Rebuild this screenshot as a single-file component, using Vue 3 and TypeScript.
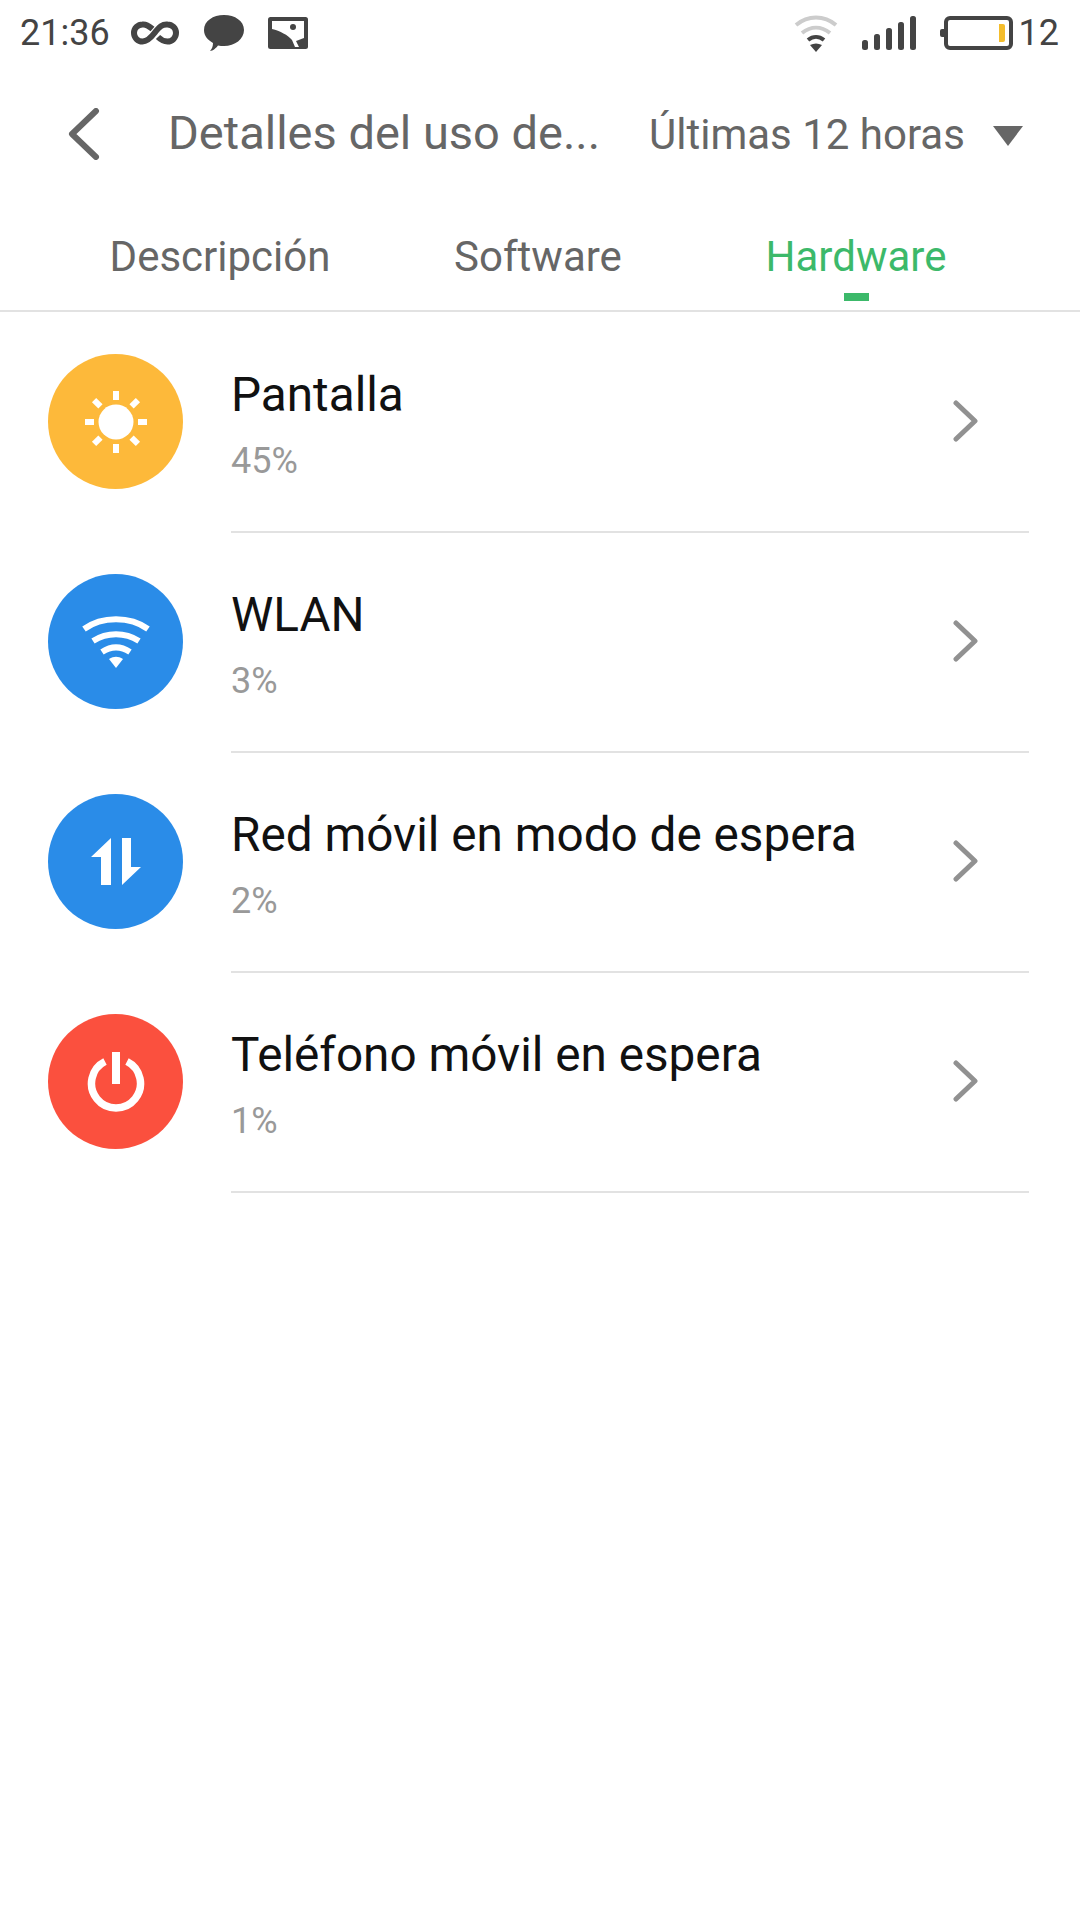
<script setup lang="ts">
interface Row {
  name: string;
  percent: string;
  color: string;
  icon: string;
}

const tabs = ["Descripción", "Software", "Hardware"];
const rows: Row[] = [
  { name: "Pantalla", percent: "45%", color: "#fdb93a", icon: "sun" },
  { name: "WLAN", percent: "3%", color: "#2a8ce8", icon: "wifi" },
  { name: "Red móvil en modo de espera", percent: "2%", color: "#2a8ce8", icon: "data" },
  { name: "Teléfono móvil en espera", percent: "1%", color: "#fb503e", icon: "power" },
];
</script>

<template>
  <div class="page">
    <div class="status">
      <span class="time">21:36</span>
      <svg class="st-inf" width="48" height="24" viewBox="0 0 48 24">
        <path d="M21.500 8C18 5 15 3 11.500 3.500a8.500 8.500 0 0 0 0 17c4 0 7-2 12-8.500s8-9 13-8.500a8.500 8.500 0 0 1 0 17c-4 0-7-2-9.500-4.500" fill="none" stroke="#444" stroke-width="6" />
      </svg>
      <svg class="st-msg" width="40" height="37" viewBox="0 0 40 37">
        <path d="M20 0C31 0 40 6 40 15S31 31 20 31c-2 0-4 0-6-.5C12 33 9 36 6 36c2-2 3-5 3-8C4 25 0 21 0 15 0 6 9 0 20 0Z" fill="#444" />
      </svg>
      <svg class="st-pic" width="40" height="32" viewBox="0 0 40 32">
        <rect width="40" height="32" rx="2.500" fill="#444" />
        <path d="M4 4h32v17c-3 1-5 2-8 3l3 6h-4l-3-7C20 18 12 14 4 12Z" fill="#fff" />
        <circle cx="25" cy="10" r="3" fill="#444" />
      </svg>
      <span class="spacer"></span>
      <svg class="st-wifi" width="44" height="38" viewBox="0 0 44 38">
        <path d="M2 11C14 1 30 1 42 11" fill="none" stroke="#ccc" stroke-width="4" />
        <path d="M8 19c9-7 19-7 28 0" fill="none" stroke="#ccc" stroke-width="4" />
        <path d="M14 26c5-4 11-4 16 0" fill="none" stroke="#444" stroke-width="4" />
        <path d="M16 31c4-2 8-2 12 0l-6 7Z" fill="#444" />
      </svg>
      <svg class="st-sig" width="54" height="34" viewBox="0 0 54 34">
        <rect x="0" y="24" width="6" height="10" rx="2.500" fill="#444" />
        <rect x="12" y="18" width="6" height="16" rx="2.500" fill="#444" />
        <rect x="24" y="12" width="6" height="22" rx="2.500" fill="#444" />
        <rect x="36" y="6" width="6" height="28" rx="2.500" fill="#444" />
        <rect x="48" y="0" width="6" height="34" rx="2.500" fill="#444" />
      </svg>
      <svg class="st-bat" width="73" height="34" viewBox="0 0 73 34">
        <rect x="0" y="13" width="6" height="8" rx="2" fill="#444" />
        <rect x="6" y="2" width="65" height="30" rx="4" fill="none" stroke="#444" stroke-width="4" />
        <path d="M59 8h4a2 2 0 0 1 2 2v14a2 2 0 0 1-2 2h-4Z" fill="#f4bd2c" />
      </svg>
      <span class="level">12</span>
    </div>

    <div class="header">
      <svg class="back" width="36" height="52" viewBox="0 0 36 52">
        <path d="M30 3 6 26l24 23" fill="none" stroke="#666" stroke-width="6" stroke-linecap="round" stroke-linejoin="round" />
      </svg>
      <span class="title">Detalles del uso de...</span>
      <span class="range">Últimas 12 horas</span>
      <svg class="caret" width="30" height="20" viewBox="0 0 30 20">
        <path d="M0 0h30L15 20Z" fill="#666" />
      </svg>
    </div>

    <div class="tabs">
      <div v-for="(tab, i) in tabs" :key="tab" class="tab" :class="{ active: i === 2 }">{{ tab }}</div>
    </div>

    <div class="list">
      <div v-for="row in rows" :key="row.name" class="row">
        <div class="circle" :style="{ background: row.color }">
          <svg v-if="row.icon === 'sun'" width="64" height="64" viewBox="0 0 64 64">
            <circle cx="32" cy="32" r="17.500" fill="#fff" />
            <g fill="#fff">
              <rect x="29" y="1" width="6" height="9" />
              <rect x="29" y="54" width="6" height="9" />
              <rect x="1" y="29" width="9" height="6" />
              <rect x="54" y="29" width="9" height="6" />
              <rect x="29" y="1" width="6" height="9" transform="rotate(45 32 32)" />
              <rect x="29" y="1" width="6" height="9" transform="rotate(135 32 32)" />
              <rect x="29" y="1" width="6" height="9" transform="rotate(225 32 32)" />
              <rect x="29" y="1" width="6" height="9" transform="rotate(315 32 32)" />
            </g>
          </svg>
          <svg v-else-if="row.icon === 'wifi'" width="68" height="54" viewBox="0 0 68 54">
            <path d="M2 14C20 1 48 1 66 14" fill="none" stroke="#fff" stroke-width="6" />
            <path d="M11 26c14-9 32-9 46 0" fill="none" stroke="#fff" stroke-width="6" />
            <path d="M20 37c9-6 19-6 28 0" fill="none" stroke="#fff" stroke-width="6" />
            <path d="M27 44c5-3 9-3 14 0l-7 9Z" fill="#fff" />
          </svg>
          <svg v-else-if="row.icon === 'data'" width="50" height="48" viewBox="0 0 50 48">
            <path d="M20 0v47H10V19H0Z" fill="#fff" />
            <path d="M31 0h9v29h10L31 47Z" fill="#fff" />
          </svg>
          <svg v-else width="58" height="60" viewBox="0 0 58 60">
            <path d="M18 9.500a24.500 24.500 0 1 0 22 0" fill="none" stroke="#fff" stroke-width="7.500" />
            <rect x="25" y="0" width="8" height="32" fill="#fff" />
          </svg>
        </div>
        <div class="body">
          <div class="text">
            <div class="name">{{ row.name }}</div>
            <div class="percent">{{ row.percent }}</div>
          </div>
          <svg class="arrow" width="26" height="42" viewBox="0 0 26 42">
            <path d="M3 3l19 18L3 39" fill="none" stroke="#919191" stroke-width="5" stroke-linecap="round" stroke-linejoin="round" />
          </svg>
        </div>
      </div>
    </div>
  </div>
</template>

<style>
html,
body {
  margin: 0;
  background: #fff;
}
</style>

<style scoped>
.page {
  width: 1080px;
  height: 1920px;
  overflow: hidden;
  background: #fff;
  font-family: Roboto, "Liberation Sans", sans-serif;
}

.status {
  display: flex;
  align-items: center;
  height: 66px;
  padding: 0 21px 0 20px;
  color: #444;
}

.time {
  font-size: 36px;
  width: 111px;
}

.level {
  font-size: 36px;
  margin-left: 6px;
}

.st-msg {
  margin-left: 25px;
}

.st-pic {
  margin-left: 24px;
}

.spacer {
  flex: 1;
}

.st-sig {
  margin-left: 24px;
}

.st-bat {
  margin-left: 24px;
}

.header {
  display: flex;
  align-items: center;
  height: 136px;
  padding-left: 66px;
  color: #666;
}

.title {
  font-size: 47px;
  line-height: 54px;
  margin-top: -2px;
  margin-left: 66px;
  width: 481px;
  white-space: nowrap;
}

.range {
  font-size: 42px;
  width: 344px;
  white-space: nowrap;
}

.caret {
  margin-top: 4px;
}

.tabs {
  display: flex;
  height: 110px;
  padding-left: 61px;
  box-sizing: border-box;
  border-bottom: 2px solid #e2e2e2;
}

.tab {
  position: relative;
  width: 318px;
  padding-top: 31px;
  text-align: center;
  font-size: 42px;
  line-height: 48px;
  color: #666;
}

.tab.active {
  color: #3cb96a;
}

.tab.active::after {
  content: "";
  position: absolute;
  left: 50%;
  bottom: 9px;
  width: 25px;
  height: 8px;
  margin-left: -12px;
  background: #3cb96a;
}

.row {
  display: flex;
  height: 220px;
  padding-left: 48px;
}

.circle {
  flex: none;
  display: flex;
  align-items: center;
  justify-content: center;
  width: 135px;
  height: 135px;
  margin-top: 42px;
  margin-right: 48px;
  border-radius: 50%;
}

.body {
  flex: none;
  display: flex;
  align-items: center;
  width: 798px;
  height: 221px;
  box-sizing: border-box;
  border-bottom: 2px solid #e2e2e2;
}

.text {
  flex: 1;
  padding-top: 6px;
}

.name {
  font-size: 47.700px;
  line-height: 54px;
  color: #111;
}

.percent {
  font-size: 36px;
  line-height: 40px;
  margin-top: 19px;
  color: #999;
}

.arrow {
  margin-right: 50px;
  margin-bottom: 2px;
}
</style>
